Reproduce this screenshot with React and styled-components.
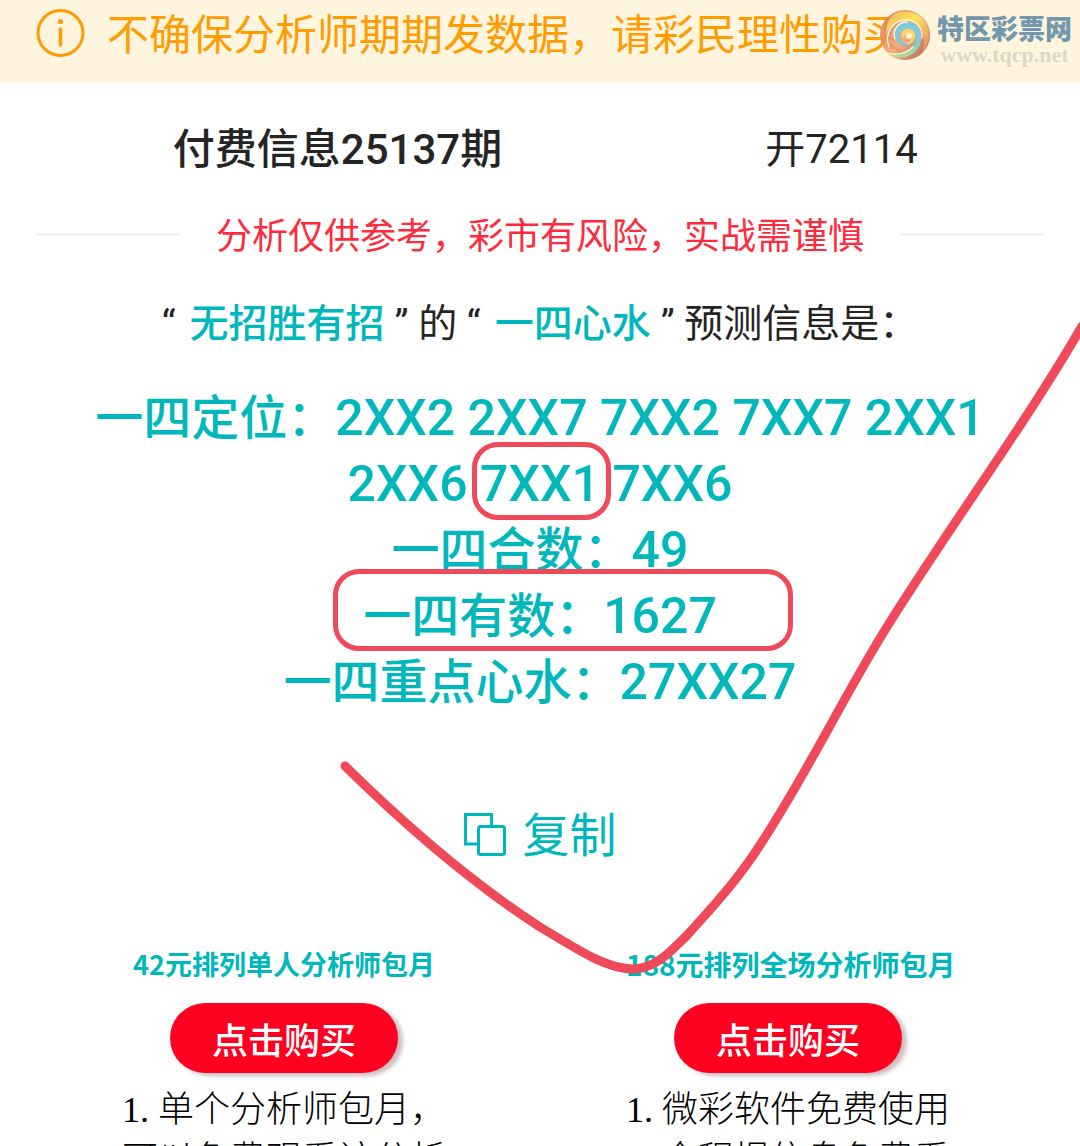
import styled, { createGlobalStyle, css } from 'styled-components'

const GlobalStyle = createGlobalStyle`
    * {
        box-sizing: border-box;
    }

    :root {
        --color-primary: #00b8bb;
        --color-warning: #ff9c00;
        --color-danger: #ff2a3c;
        --color-mark: #ef4a59;
        --color-text: #242424;
    }

    body {
        margin: 0;
        background: #fff;
        color: var(--color-text);
        font-family: Roboto, 'Noto Sans CJK SC', sans-serif;
    }
`

const Page = styled.div`
    position: relative;
    height: 100vh;
    overflow: hidden;
`

const Notice = styled.header`
    position: relative;
    display: flex;
    align-items: flex-start;
    gap: 22px;
    height: 82px;
    padding: 8px 36px 0;
    background: #fff5de;
    color: var(--color-warning);
    font-size: 42px;
    line-height: 56px;
    white-space: nowrap;

    svg {
        flex: none;
    }
`

const NoticeText = styled.p`
    margin: 0;
`

const Brand = styled.div`
    position: absolute;
    top: 8px;
    right: 8px;
    display: flex;
    gap: 6px;
    color: #7397ac;
`

const BrandText = styled.div`
    display: flex;
    flex-direction: column;
    align-items: center;
    padding-top: 6px;
`

const BrandName = styled.span`
    font-size: 27px;
    font-weight: 900;
    line-height: 32px;
`

const BrandUrl = styled.span`
    color: #dcd6ca;
    font-family: 'Liberation Serif', serif;
    font-size: 22px;
    font-weight: 700;
    line-height: 18px;
`

const Heading = styled.div`
    display: grid;
    grid-template-columns: 5fr 3fr;
    align-items: center;
    padding-top: 38px;
    line-height: 60px;
    text-align: center;
`

const Issue = styled.h1`
    margin: 0;
    font-size: 42px;
    font-weight: 500;
`

const Drawn = styled.span`
    padding-right: 72px;
    font-size: 40px;
`

const Divider = styled.div`
    display: flex;
    align-items: center;
    gap: 36px;
    padding: 30px 36px 0;
    color: var(--color-danger);
    font-size: 36px;
    line-height: 54px;
    white-space: nowrap;

    &::before,
    &::after {
        content: '';
        flex: 1;
        height: 3px;
        margin-bottom: 6px;
        background: #f3f3f3;
    }
`

const Intro = styled.p`
    margin: 0;
    padding-top: 31px;
    font-size: 39px;
    line-height: 58px;
    text-align: center;
`

const Name = styled.strong`
    padding: 0 10px 0 14px;
    color: var(--color-primary);
    font-weight: 500;
`

const Picks = styled.section`
    display: flex;
    flex-direction: column;
    align-items: center;
    padding-top: 33px;
    color: var(--color-primary);
    font-size: 48px;
    font-weight: 500;
    line-height: 66px;
    text-align: center;
`

const Pick = styled.p`
    position: relative;
    max-width: 912px;
    margin: 0;
`

const Code = styled.span`
    position: relative;
    font-size: 50px;
    line-height: 1;
`

const ring = css`
    content: '';
    position: absolute;
    border: 5px solid var(--color-mark);
    border-radius: 26px;
`

const MarkedCode = styled(Code)`
    &::after {
        ${ring}
        inset: -13px -11px -7px -8px;
    }
`

const MarkedPick = styled(Pick)`
    &::after {
        ${ring}
        inset: -15px -76px -1px -30px;
    }
`

const CopyButton = styled.button`
    display: flex;
    align-items: center;
    gap: 16px;
    margin: 85px auto 0;
    padding: 0;
    border: 0;
    background: none;
    color: var(--color-primary);
    font-family: inherit;
    font-size: 47px;
    line-height: 70px;
    cursor: pointer;

    svg {
        margin-bottom: 4px;
    }
`

const Packages = styled.div`
    display: grid;
    grid-template-columns: 1fr 1fr;
    padding: 64px 36px 0;
`

const Package = styled.section`
    display: flex;
    flex-direction: column;
    align-items: center;
    padding-right: 8px;
`

const PackageBody = styled.div`
    width: 324px;
    text-align: center;
`

const PackageTitle = styled.h2`
    margin: 0;
    color: var(--color-primary);
    font-family: 'Noto Sans CJK SC', sans-serif;
    font-size: ${(props) => (props.$large ? '28px' : '27px')};
    font-weight: 700;
    line-height: 58px;
    white-space: nowrap;
`

const BuyButton = styled.button`
    width: 228px;
    height: 70px;
    margin: 10px 0 12px;
    padding: 0;
    border: 0;
    border-radius: 35px;
    background: #ff0020;
    box-shadow: 5px 3px 4px #cdbfc0;
    color: #fff;
    font-family: inherit;
    font-size: 36px;
    font-weight: 500;
    cursor: pointer;
`

const Terms = styled.p`
    margin: 0;
    color: #000;
    font-family: 'Liberation Serif', 'Noto Sans CJK SC', serif;
    font-size: 36px;
    font-weight: 300;
    line-height: 50px;
    text-align: left;
`

const Tick = styled.svg`
    position: absolute;
    top: 0;
    left: 0;
    width: 100%;
    pointer-events: none;
`

function InfoIcon() {
    return (
        <svg width="49" height="50" viewBox="0 0 49 50" fill="none">
            <circle cx="24.5" cy="25" r="22.5" stroke="currentColor" strokeWidth="3" />
            <circle cx="24.5" cy="13.5" r="2.6" fill="currentColor" />
            <path
                d="M24.5 21v16"
                stroke="currentColor"
                strokeWidth="3.6"
                strokeLinecap="round"
            />
        </svg>
    )
}

function CopyIcon() {
    return (
        <svg width="43" height="43" viewBox="0 0 43 43" fill="none" stroke="currentColor">
            <path d="M13 31H1.5V1.5h26V12" strokeWidth="3" />
            <rect x="14.5" y="13.5" width="26" height="28" rx="2" strokeWidth="3" />
        </svg>
    )
}

function SwirlLogo() {
    return (
        <svg width="52" height="54" viewBox="0 0 52 54" fill="none">
            <defs>
                <linearGradient id="ball" x1="0.1" y1="0.2" x2="0.9" y2="0.9">
                    <stop offset="0" stopColor="#d97f56" />
                    <stop offset="0.5" stopColor="#f0a272" />
                    <stop offset="1" stopColor="#b55243" />
                </linearGradient>
                <linearGradient id="shine" x1="0" y1="0" x2="1" y2="1">
                    <stop offset="0" stopColor="#f3b05f" />
                    <stop offset="0.4" stopColor="#fde35a" />
                    <stop offset="1" stopColor="#e88663" />
                </linearGradient>
                <linearGradient id="wave" x1="0" y1="1" x2="1" y2="0">
                    <stop offset="0" stopColor="#c4dc7c" />
                    <stop offset="0.5" stopColor="#9ad7a8" />
                    <stop offset="1" stopColor="#6fc6dc" />
                </linearGradient>
            </defs>
            <circle cx="26" cy="27" r="25" fill="url(#ball)" opacity="0.85" />
            <path
                d="M12 9C22-1 42 3 48 17c4 10 1 21-5 28 3-9 4-20-3-27-8-7-18-7-26-1-4 3-6 7-7 11 0-7 1-14 5-19z"
                fill="url(#shine)"
            />
            <path
                d="M7 45c11 3 21 0 28-7 5-6 6-13 4-18 5 8 4 17-2 23-8 8-21 9-30 2z"
                fill="url(#wave)"
            />
            <path
                d="M17 31c-3-9 3-17 12-17 8 0 13 7 12 14-1 6-5 10-10 12 5-4 7-9 5-14-2-4-6-6-10-5-5 2-7 7-4 11 2 4 6 5 10 3-4 5-12 3-15-4z"
                fill="#7accd8"
            />
            <path
                d="M23 30c-2-5 2-10 7-9 6 1 8 7 5 11-2 4-6 5-9 3 4 0 7-3 6-6-1-4-6-4-9 1z"
                fill="#fbd573"
            />
            <path
                d="M10 39C5 26 13 13 26 12c11-1 18 8 17 18M5 44c11 4 22 2 29-5M16 31c-3-9 3-17 12-17"
                stroke="#fff8e8"
                strokeWidth="1.3"
                strokeLinecap="round"
            />
            <circle cx="30" cy="28" r="3" fill="#fff3cf" />
        </svg>
    )
}

function App() {
    return (
        <Page>
            <GlobalStyle />
            <Notice>
                <InfoIcon />
                <NoticeText>不确保分析师期期发数据，请彩民理性购买</NoticeText>
                <Brand>
                    <SwirlLogo />
                    <BrandText>
                        <BrandName>特区彩票网</BrandName>
                        <BrandUrl>www.tqcp.net</BrandUrl>
                    </BrandText>
                </Brand>
            </Notice>

            <main>
                <Heading>
                    <Issue>付费信息25137期</Issue>
                    <Drawn>开72114</Drawn>
                </Heading>
                <Divider>分析仅供参考，彩市有风险，实战需谨慎</Divider>
                <Intro>
                    “<Name>无招胜有招</Name>” 的 “<Name>一四心水</Name>” 预测信息是：
                </Intro>

                <Picks>
                    <Pick>
                        一四定位：
                        <Code>
                            2XX2 2XX7 7XX2 7XX7 2XX1 2XX6 <MarkedCode>7XX1</MarkedCode> 7XX6
                        </Code>
                    </Pick>
                    <Pick>
                        一四合数：<Code>49</Code>
                    </Pick>
                    <MarkedPick>
                        一四有数：<Code>1627</Code>
                    </MarkedPick>
                    <Pick>
                        一四重点心水：<Code>27XX27</Code>
                    </Pick>
                </Picks>

                <CopyButton type="button">
                    <CopyIcon />
                    复制
                </CopyButton>

                <Packages>
                    <Package>
                        <PackageBody>
                            <PackageTitle>42元排列单人分析师包月</PackageTitle>
                            <BuyButton type="button">点击购买</BuyButton>
                            <Terms>1. 单个分析师包月，可以免费观看该分析</Terms>
                        </PackageBody>
                    </Package>
                    <Package>
                        <PackageBody>
                            <PackageTitle $large>188元排列全场分析师包月</PackageTitle>
                            <BuyButton type="button">点击购买</BuyButton>
                            <Terms>1. 微彩软件免费使用 2. 全程提信息免费看</Terms>
                        </PackageBody>
                    </Package>
                </Packages>
            </main>

            <Tick viewBox="0 0 1080 1146" fill="none">
                <path
                    d="M345 766C405 825 475 885 540 927C580 951 605 968 632 969C650 969 664 958 674 948C680 942 685 938 690 932C720 899 742 874 762 842C810 768 840 703 885 630C945 533 1025 425 1082 326"
                    stroke="var(--color-mark)"
                    strokeWidth="9"
                    strokeLinecap="round"
                />
            </Tick>
        </Page>
    )
}

export default App
